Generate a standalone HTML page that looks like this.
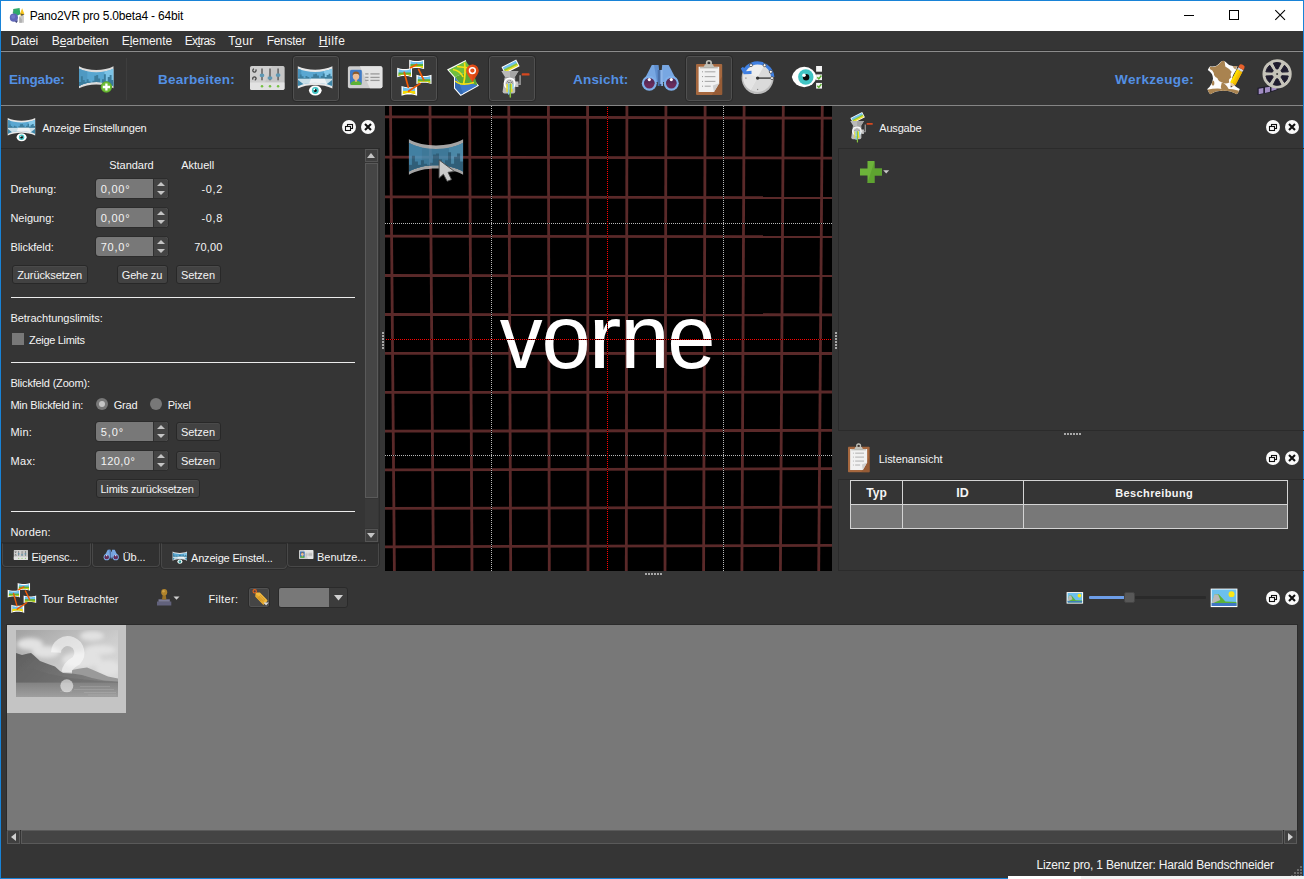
<!DOCTYPE html>
<html><head><meta charset="utf-8"><title>Pano2VR pro 5.0beta4 - 64bit</title>
<style>
html,body{margin:0;padding:0;background:#353535;}
body{width:1304px;height:879px;overflow:hidden;background:#353535;font-family:"Liberation Sans",sans-serif;position:relative;}
div,span,svg{box-sizing:border-box;}
svg{position:absolute;overflow:visible;}
.btn{position:absolute;background:#424242;border:1px solid #282828;border-radius:3px;box-shadow:inset 0 1px 0 #4a4a4a;}
.spin{position:absolute;background:#787878;border-radius:3px;overflow:hidden;box-shadow:0 0 0 1px rgba(30,30,30,.35);}
.spin i{position:absolute;right:0;top:0;bottom:0;width:14px;background:#444444;border-left:1px solid #303030;}
.spin i:before{content:"";position:absolute;left:2.5px;top:3px;border:4px solid transparent;border-top:0;border-bottom:4px solid #c4c4c4;}
.spin i:after{content:"";position:absolute;left:2.5px;bottom:3px;border:4px solid transparent;border-bottom:0;border-top:4px solid #c4c4c4;}
.hr{position:absolute;height:1px;background:#ececec;}
.tbtn{position:absolute;width:48px;height:47px;border:1px solid #292929;border-radius:4px;background:#3a3a3a;box-shadow:inset 0 0 0 1px #505050;}
.circ{position:absolute;width:14px;height:14px;border-radius:50%;background:#fafafa;}
.frame{position:absolute;border:1px solid #2b2b2b;}
.tab{position:absolute;border:1px solid #484848;border-top:1px solid #2a2a2a;border-radius:0 0 4px 4px;background:#323232;box-shadow:0 0 0 1px #2c2c2c;}
</style></head>
<body>
<div style="position:absolute;left:0px;top:0px;width:1304px;height:879px;border:1px solid #1883d7;"></div>
<div style="position:absolute;left:1px;top:1px;width:1302px;height:30px;background:#ffffff;"></div>
<!--APPICON-->
<span style="position:absolute;left:29.66px;top:7.84px;font-size:12px;line-height:16px;font-weight:normal;color:#000;letter-spacing:-0.193px;white-space:pre;">Pano2VR pro 5.0beta4 - 64bit</span>
<svg style="left:1180px;top:5px" width="120" height="22" viewBox="0 0 120 22"><path d="M4 10.5h10" stroke="#000" stroke-width="1" fill="none"/><rect x="49.5" y="5.5" width="9" height="9" stroke="#000" stroke-width="1" fill="none"/><path d="M95.3 5.2l9.7 9.700M105 5.2l-9.700 9.700" stroke="#000" stroke-width="1.1" fill="none"/></svg>
<div style="position:absolute;left:1px;top:50px;width:1302px;height:1px;background:#2c2c2c;"></div>
<div style="position:absolute;left:1px;top:51px;width:1302px;height:1px;background:#8c8c8c;"></div>
<span style="position:absolute;left:10.86px;top:32.84px;font-size:12px;line-height:16px;font-weight:normal;color:#f4f4f4;letter-spacing:-0.189px;white-space:pre;">Datei</span>
<span style="position:absolute;left:51.86px;top:32.84px;font-size:12px;line-height:16px;font-weight:normal;color:#f4f4f4;letter-spacing:-0.143px;white-space:pre;">B<span style="text-decoration:underline;text-underline-offset:1px">e</span>arbeiten</span>
<span style="position:absolute;left:121.66px;top:32.84px;font-size:12px;line-height:16px;font-weight:normal;color:#f4f4f4;letter-spacing:-0.035px;white-space:pre;">E<span style="text-decoration:underline;text-underline-offset:1px">l</span>emente</span>
<span style="position:absolute;left:184.76px;top:32.84px;font-size:12px;line-height:16px;font-weight:normal;color:#f4f4f4;letter-spacing:-0.631px;white-space:pre;">Ex<span style="text-decoration:underline;text-underline-offset:1px">t</span>ras</span>
<span style="position:absolute;left:228.36px;top:32.84px;font-size:12px;line-height:16px;font-weight:normal;color:#f4f4f4;letter-spacing:0.539px;white-space:pre;">T<span style="text-decoration:underline;text-underline-offset:1px">o</span>ur</span>
<span style="position:absolute;left:266.66px;top:32.84px;font-size:12px;line-height:16px;font-weight:normal;color:#f4f4f4;letter-spacing:-0.271px;white-space:pre;">Fenster</span>
<span style="position:absolute;left:318.76px;top:32.84px;font-size:12px;line-height:16px;font-weight:normal;color:#f4f4f4;letter-spacing:0.536px;white-space:pre;"><span style="text-decoration:underline;text-underline-offset:1px">H</span>ilfe</span>
<div style="position:absolute;left:1px;top:105px;width:1302px;height:1px;background:#858585;"></div>
<span style="position:absolute;left:9.05px;top:70.92px;font-size:13.5px;line-height:18px;font-weight:bold;color:#5390e4;letter-spacing:-0.180px;white-space:pre;">Eingabe:</span>
<span style="position:absolute;left:158.06px;top:70.92px;font-size:13.5px;line-height:18px;font-weight:bold;color:#5390e4;letter-spacing:0.247px;white-space:pre;">Bearbeiten:</span>
<span style="position:absolute;left:573.05px;top:70.92px;font-size:13.5px;line-height:18px;font-weight:bold;color:#5390e4;letter-spacing:0.179px;white-space:pre;">Ansicht:</span>
<span style="position:absolute;left:1115.06px;top:70.92px;font-size:13.5px;line-height:18px;font-weight:bold;color:#5390e4;letter-spacing:0.358px;white-space:pre;">Werkzeuge:</span>
<div style="position:absolute;left:126px;top:58px;width:1px;height:42px;background:#3e3e3e;"></div>
<div class="tbtn" style="left:292px;top:55px"></div>
<div class="tbtn" style="left:390px;top:55px"></div>
<div class="tbtn" style="left:488px;top:55px"></div>
<div class="tbtn" style="left:685px;top:55px"></div>

<!--ICON_ANZEIGE-->
<span style="position:absolute;left:42.23px;top:121.19px;font-size:11px;line-height:14px;font-weight:normal;color:#f4f4f4;letter-spacing:-0.221px;white-space:pre;">Anzeige Einstellungen</span>
<div class="circ" style="left:342px;top:120px"></div><svg style="left:342px;top:120px" width="14" height="14" viewBox="0 0 14 14"><rect x="5.5" y="4.5" width="5" height="4" fill="none" stroke="#111" stroke-width="1.1"/><rect x="3.5" y="6.5" width="5" height="4" fill="#fafafa" stroke="#111" stroke-width="1.1"/></svg><div class="circ" style="left:361px;top:120px"></div><svg style="left:361px;top:120px" width="14" height="14" viewBox="0 0 14 14"><path d="M4 4l6 6M10 4l-6 6" stroke="#111" stroke-width="2.1" stroke-linecap="butt"/></svg>
<div style="position:absolute;left:1px;top:148px;width:379px;height:1px;background:#2a2a2a;"></div>
<div style="position:absolute;left:379px;top:149px;width:1px;height:394px;background:#2e2e2e;"></div>
<div style="position:absolute;left:1px;top:542px;width:379px;height:1px;background:#2a2a2a;"></div>
<div style="position:absolute;left:365px;top:149px;width:13px;height:13px;background:#3f3f3f;border:1px solid #555;"></div>
<svg style="left:367px;top:153px" width="8" height="5"><path d="M0 5L4 0L8 5z" fill="#c4c4c4"/></svg>
<div style="position:absolute;left:365px;top:163px;width:13px;height:335px;background:#454545;border:1px solid #5a5a5a;"></div>
<div style="position:absolute;left:365px;top:499px;width:13px;height:29px;background:#3a3a3a;"></div>
<div style="position:absolute;left:365px;top:529px;width:13px;height:13px;background:#3f3f3f;border:1px solid #555;"></div>
<svg style="left:367px;top:533px" width="8" height="5"><path d="M0 0L4 5L8 0z" fill="#c4c4c4"/></svg>
<span style="position:absolute;left:109.23px;top:158.19px;font-size:11px;line-height:14px;font-weight:normal;color:#f4f4f4;letter-spacing:-0.032px;white-space:pre;">Standard</span>
<span style="position:absolute;left:181.23px;top:158.19px;font-size:11px;line-height:14px;font-weight:normal;color:#f4f4f4;letter-spacing:-0.017px;white-space:pre;">Aktuell</span>
<span style="position:absolute;left:10.43px;top:182.19px;font-size:11px;line-height:14px;font-weight:normal;color:#f4f4f4;letter-spacing:0.095px;white-space:pre;">Drehung:</span>
<div class="spin" style="left:96px;top:179px;width:72px;height:19px"><i></i></div><span style="position:absolute;left:100.63px;top:182.19px;font-size:11px;line-height:14px;font-weight:normal;color:#f4f4f4;letter-spacing:0.804px;white-space:pre;">0,00°</span>
<span style="position:absolute;left:201.43px;top:182.19px;font-size:11px;line-height:14px;font-weight:normal;color:#f4f4f4;letter-spacing:0.687px;white-space:pre;">-0,2</span>
<span style="position:absolute;left:10.43px;top:211.19px;font-size:11px;line-height:14px;font-weight:normal;color:#f4f4f4;letter-spacing:-0.017px;white-space:pre;">Neigung:</span>
<div class="spin" style="left:96px;top:208px;width:72px;height:19px"><i></i></div><span style="position:absolute;left:100.63px;top:211.19px;font-size:11px;line-height:14px;font-weight:normal;color:#f4f4f4;letter-spacing:0.804px;white-space:pre;">0,00°</span>
<span style="position:absolute;left:201.43px;top:211.19px;font-size:11px;line-height:14px;font-weight:normal;color:#f4f4f4;letter-spacing:0.687px;white-space:pre;">-0,8</span>
<span style="position:absolute;left:10.43px;top:240.19px;font-size:11px;line-height:14px;font-weight:normal;color:#f4f4f4;letter-spacing:-0.067px;white-space:pre;">Blickfeld:</span>
<div class="spin" style="left:96px;top:237px;width:72px;height:19px"><i></i></div><span style="position:absolute;left:100.63px;top:240.19px;font-size:11px;line-height:14px;font-weight:normal;color:#f4f4f4;letter-spacing:0.804px;white-space:pre;">70,0°</span>
<span style="position:absolute;left:194.23px;top:240.19px;font-size:11px;line-height:14px;font-weight:normal;color:#f4f4f4;letter-spacing:0.175px;white-space:pre;">70,00</span>
<div class="btn" style="left:12px;top:265px;width:76px;height:19px"></div><span style="position:absolute;left:17.23px;top:268.19px;font-size:11px;line-height:14px;font-weight:normal;color:#f4f4f4;letter-spacing:-0.100px;white-space:pre;">Zurücksetzen</span>
<div class="btn" style="left:117px;top:265px;width:51px;height:19px"></div><span style="position:absolute;left:121.83px;top:268.19px;font-size:11px;line-height:14px;font-weight:normal;color:#f4f4f4;letter-spacing:-0.194px;white-space:pre;">Gehe zu</span>
<div class="btn" style="left:176px;top:265px;width:45px;height:19px"></div><span style="position:absolute;left:180.93px;top:268.19px;font-size:11px;line-height:14px;font-weight:normal;color:#f4f4f4;letter-spacing:-0.024px;white-space:pre;">Setzen</span>
<div class="hr" style="left:11px;top:297px;width:344px"></div>
<span style="position:absolute;left:10.43px;top:311.19px;font-size:11px;line-height:14px;font-weight:normal;color:#f4f4f4;letter-spacing:-0.028px;white-space:pre;">Betrachtungslimits:</span>
<div style="position:absolute;left:12px;top:333px;width:12px;height:12px;background:#787878;"></div>
<span style="position:absolute;left:29.03px;top:333.19px;font-size:11px;line-height:14px;font-weight:normal;color:#f4f4f4;letter-spacing:-0.306px;white-space:pre;">Zeige Limits</span>
<div class="hr" style="left:11px;top:362px;width:344px"></div>
<span style="position:absolute;left:10.43px;top:376.19px;font-size:11px;line-height:14px;font-weight:normal;color:#f4f4f4;letter-spacing:-0.181px;white-space:pre;">Blickfeld (Zoom):</span>
<span style="position:absolute;left:10.43px;top:398.19px;font-size:11px;line-height:14px;font-weight:normal;color:#f4f4f4;letter-spacing:-0.218px;white-space:pre;">Min Blickfeld in:</span>
<div style="position:absolute;left:96px;top:398px;width:12px;height:12px;background:#787878;border-radius:50%;"></div>
<div style="position:absolute;left:99px;top:401px;width:6px;height:6px;background:#c6c6c6;border-radius:50%;"></div>
<span style="position:absolute;left:113.73px;top:398.19px;font-size:11px;line-height:14px;font-weight:normal;color:#f4f4f4;letter-spacing:-0.180px;white-space:pre;">Grad</span>
<div style="position:absolute;left:150px;top:398px;width:12px;height:12px;background:#787878;border-radius:50%;"></div>
<span style="position:absolute;left:167.63px;top:398.19px;font-size:11px;line-height:14px;font-weight:normal;color:#f4f4f4;letter-spacing:-0.103px;white-space:pre;">Pixel</span>
<span style="position:absolute;left:10.43px;top:425.19px;font-size:11px;line-height:14px;font-weight:normal;color:#f4f4f4;letter-spacing:0.216px;white-space:pre;">Min:</span>
<div class="spin" style="left:96px;top:422px;width:72px;height:19px"><i></i></div><span style="position:absolute;left:100.63px;top:425.19px;font-size:11px;line-height:14px;font-weight:normal;color:#f4f4f4;letter-spacing:0.976px;white-space:pre;">5,0°</span>
<div class="btn" style="left:176px;top:422px;width:45px;height:19px"></div><span style="position:absolute;left:180.93px;top:425.19px;font-size:11px;line-height:14px;font-weight:normal;color:#f4f4f4;letter-spacing:-0.024px;white-space:pre;">Setzen</span>
<span style="position:absolute;left:10.43px;top:454.19px;font-size:11px;line-height:14px;font-weight:normal;color:#f4f4f4;letter-spacing:0.362px;white-space:pre;">Max:</span>
<div class="spin" style="left:96px;top:451px;width:72px;height:19px"><i></i></div><span style="position:absolute;left:100.63px;top:454.19px;font-size:11px;line-height:14px;font-weight:normal;color:#f4f4f4;letter-spacing:0.458px;white-space:pre;">120,0°</span>
<div class="btn" style="left:176px;top:451px;width:45px;height:19px"></div><span style="position:absolute;left:180.93px;top:454.19px;font-size:11px;line-height:14px;font-weight:normal;color:#f4f4f4;letter-spacing:-0.024px;white-space:pre;">Setzen</span>
<div class="btn" style="left:96px;top:479px;width:104px;height:19px"></div><span style="position:absolute;left:100.43px;top:482.19px;font-size:11px;line-height:14px;font-weight:normal;color:#f4f4f4;letter-spacing:-0.176px;white-space:pre;">Limits zurücksetzen</span>
<div class="hr" style="left:11px;top:511px;width:344px"></div>
<span style="position:absolute;left:10.43px;top:525.19px;font-size:11px;line-height:14px;font-weight:normal;color:#f4f4f4;letter-spacing:0.182px;white-space:pre;">Norden:</span>
<div class="tab" style="left:2px;top:543px;width:89px;height:24px;background:#313131"></div>
<span style="position:absolute;left:31.43px;top:550.19px;font-size:11px;line-height:14px;font-weight:normal;color:#f4f4f4;letter-spacing:-0.176px;white-space:pre;">Eigensc...</span>
<div class="tab" style="left:92px;top:543px;width:68px;height:24px;background:#313131"></div>
<span style="position:absolute;left:122.73px;top:550.19px;font-size:11px;line-height:14px;font-weight:normal;color:#f4f4f4;letter-spacing:-0.076px;white-space:pre;">Üb...</span>
<div class="tab" style="left:161px;top:543px;width:126px;height:26px;background:#363636"></div>
<span style="position:absolute;left:191.03px;top:551.19px;font-size:11px;line-height:14px;font-weight:normal;color:#f4f4f4;letter-spacing:-0.181px;white-space:pre;">Anzeige Einstel...</span>
<div class="tab" style="left:287px;top:543px;width:92px;height:24px;background:#313131"></div>
<span style="position:absolute;left:317.03px;top:550.19px;font-size:11px;line-height:14px;font-weight:normal;color:#f4f4f4;letter-spacing:-0.013px;white-space:pre;">Benutze...</span>
<!--TABICONS-->
<div style="position:absolute;left:385px;top:106px;width:447px;height:465px;background:#000;overflow:hidden"><svg style="left:0;top:0" width="447" height="465" viewBox="385 106 447 465"><g stroke="#5a2929" stroke-width="2.8" fill="none"><path d="M390.46 101L394.44 576"/><path d="M429.96 101L433.44 576"/><path d="M469.57 101L472.03 576"/><path d="M508.78 101L510.72 576"/><path d="M548.39 101L549.31 576"/><path d="M587.60 101L588.00 576"/><path d="M626.91 101L626.29 576"/><path d="M665.91 101L664.99 576"/><path d="M705.12 101L703.58 576"/><path d="M744.12 101L741.88 576"/><path d="M783.33 101L780.37 576"/><path d="M822.34 101L818.66 576"/><path d="M380 116.78L837 118.22"/><path d="M380 157.19L837 158.11"/><path d="M380 196.79L837 197.71"/><path d="M380 236.19L837 236.71"/><path d="M380 275.50L837 275.70"/><path d="M380 314.50L837 314.80"/><path d="M380 353.40L837 353.50"/><path d="M380 392.40L837 392.00"/><path d="M380 431.21L837 430.39"/><path d="M380 469.91L837 468.69"/><path d="M380 508.41L837 507.09"/><path d="M380 546.82L837 545.28"/></g><text transform="translate(499.82 368.3) scale(0.9526 1)" font-family="Liberation Sans" font-size="90" fill="#fff">v</text><text transform="translate(541.46 368.3) scale(0.9836 1)" font-family="Liberation Sans" font-size="90" fill="#fff">o</text><text transform="translate(588.16 368.3) scale(1.1067 1)" font-family="Liberation Sans" font-size="90" fill="#fff">r</text><text transform="translate(620.17 368.3) scale(0.9870 1)" font-family="Liberation Sans" font-size="90" fill="#fff">n</text><text transform="translate(667.34 368.3) scale(0.9645 1)" font-family="Liberation Sans" font-size="90" fill="#fff">e</text><g stroke="#000" stroke-width="1" fill="none" shape-rendering="crispEdges"><path d="M491.5 106V571"/><path d="M723.5 106V571"/><path d="M385 223.5H832"/><path d="M385 455.5H832"/><path d="M607.5 106V571"/><path d="M385 339.5H832"/></g><g stroke="#b8b8b8" stroke-width="1" stroke-dasharray="1 1" fill="none" shape-rendering="crispEdges"><path d="M491.5 106V571"/><path d="M723.5 106V571"/><path d="M385 223.5H832"/><path d="M385 455.5H832"/></g><g stroke="#ff0000" stroke-width="1" stroke-dasharray="1 1" fill="none" shape-rendering="crispEdges"><path d="M607.5 107V571"/><path d="M386 339.5H832"/></g><g transform="translate(408.9 139.3)" opacity="0.84"><g opacity="1"><path d="M0 0.00C14.63 8.24 39.57 8.24 54.20 0.00L54.20 35.50C39.57 27.26 14.63 27.26 0 35.50Z" fill="#c4c4c4"/><clipPath id="pcv"><path d="M0 3.40C14.63 11.64 39.57 11.64 54.20 3.40L54.20 32.10C39.57 23.86 14.63 23.86 0 32.10Z"/></clipPath><g clip-path="url(#pcv)"><rect x="0" y="0" width="54.2" height="35.5" fill="#4a90b6"/><rect x="40.11" y="0" width="14.09" height="35.5" fill="#5aa2c8"/><rect x="0" y="0" width="13.01" height="35.5" fill="#4f99c2"/><path d="M0.00 33.73L0.00 25.65L3.01 25.65L3.01 16.42L6.02 16.42L6.02 22.19L9.03 22.19L9.03 27.96L12.04 27.96L12.04 21.03L15.06 21.03L15.06 24.49L18.07 24.49L18.07 30.26L21.08 30.26L21.08 23.34L24.09 23.34L24.09 15.26L27.10 15.26L27.10 14.11L30.11 14.11L30.11 19.88L33.12 19.88L33.12 26.80L36.13 26.80L36.13 21.03L39.14 21.03L39.14 12.96L42.16 12.96L42.16 24.49L45.17 24.49L45.17 17.57L48.18 17.57L48.18 14.11L51.19 14.11L51.19 22.19L54.20 22.19L54.20 33.73Z" fill="#3a7190"/><rect x="0" y="25.56" width="54.2" height="10.65" fill="#3a7190"/></g></g></g><path d="M439.2 160L439 178.2L443.4 174.2L447.2 181.3L451.5 179.6L448 172.3L454.4 171.4Z" fill="#cbcbcb" stroke="#4a4a4a" stroke-width="0.9" stroke-linejoin="round"/></svg></div>
<!--ICON_AUSGABE-->
<span style="position:absolute;left:879.23px;top:121.19px;font-size:11px;line-height:14px;font-weight:normal;color:#f4f4f4;letter-spacing:-0.168px;white-space:pre;">Ausgabe</span>
<div class="circ" style="left:1266px;top:120px"></div><svg style="left:1266px;top:120px" width="14" height="14" viewBox="0 0 14 14"><rect x="5.5" y="4.5" width="5" height="4" fill="none" stroke="#111" stroke-width="1.1"/><rect x="3.5" y="6.5" width="5" height="4" fill="#fafafa" stroke="#111" stroke-width="1.1"/></svg><div class="circ" style="left:1285px;top:120px"></div><svg style="left:1285px;top:120px" width="14" height="14" viewBox="0 0 14 14"><path d="M4 4l6 6M10 4l-6 6" stroke="#111" stroke-width="2.1" stroke-linecap="butt"/></svg>
<div class="frame" style="left:838px;top:148px;width:466px;height:283px;border-right:0"></div>
<svg style="left:860px;top:161px" width="30" height="22" viewBox="0 0 30 22"><path d="M7.5 0h7v7.5h7.5v7h-7.5v7.5h-7v-7.5h-7.5v-7h7.5z" fill="#6db33a"/><path d="M14.5 0v7.5h7.5v7h-7.5v7.5h-7z" fill="#5a9d2e" opacity=".75"/><path d="M23.2 9.2h6l-3 3.2z" fill="#c8c8c8"/></svg>
<!--ICON_LISTE-->
<span style="position:absolute;left:878.63px;top:452.19px;font-size:11px;line-height:14px;font-weight:normal;color:#f4f4f4;letter-spacing:-0.024px;white-space:pre;">Listenansicht</span>
<div class="circ" style="left:1266px;top:451px"></div><svg style="left:1266px;top:451px" width="14" height="14" viewBox="0 0 14 14"><rect x="5.5" y="4.5" width="5" height="4" fill="none" stroke="#111" stroke-width="1.1"/><rect x="3.5" y="6.5" width="5" height="4" fill="#fafafa" stroke="#111" stroke-width="1.1"/></svg><div class="circ" style="left:1285px;top:451px"></div><svg style="left:1285px;top:451px" width="14" height="14" viewBox="0 0 14 14"><path d="M4 4l6 6M10 4l-6 6" stroke="#111" stroke-width="2.1" stroke-linecap="butt"/></svg>
<div class="frame" style="left:838px;top:479px;width:466px;height:92px;border-right:0"></div>
<div style="position:absolute;left:850px;top:480px;width:438px;height:49px;border:1px solid #d4d4d4;"></div>
<div style="position:absolute;left:851px;top:505px;width:436px;height:23px;background:#787878;"></div>
<div style="position:absolute;left:851px;top:504px;width:436px;height:1px;background:#d4d4d4;"></div>
<div style="position:absolute;left:902px;top:481px;width:1px;height:47px;background:#d4d4d4;"></div>
<div style="position:absolute;left:1023px;top:481px;width:1px;height:47px;background:#d4d4d4;"></div>
<span style="position:absolute;left:866.27px;top:485.14px;font-size:12px;line-height:16px;font-weight:bold;color:#f4f4f4;letter-spacing:0.000px;white-space:pre;">Typ</span>
<span style="position:absolute;left:956.35px;top:484.97px;font-size:12.5px;line-height:16px;font-weight:bold;color:#f4f4f4;letter-spacing:0.000px;white-space:pre;">ID</span>
<span style="position:absolute;left:1115.29px;top:485.69px;font-size:11px;line-height:14px;font-weight:bold;color:#f4f4f4;letter-spacing:0.370px;white-space:pre;">Beschreibung</span>
<div style="position:absolute;left:645px;top:573px;width:2px;height:2px;background:#a8a8a8;"></div><div style="position:absolute;left:648px;top:573px;width:2px;height:2px;background:#a8a8a8;"></div><div style="position:absolute;left:651px;top:573px;width:2px;height:2px;background:#a8a8a8;"></div><div style="position:absolute;left:654px;top:573px;width:2px;height:2px;background:#a8a8a8;"></div><div style="position:absolute;left:657px;top:573px;width:2px;height:2px;background:#a8a8a8;"></div><div style="position:absolute;left:660px;top:573px;width:2px;height:2px;background:#a8a8a8;"></div>
<div style="position:absolute;left:1064px;top:433px;width:2px;height:2px;background:#a8a8a8;"></div><div style="position:absolute;left:1067px;top:433px;width:2px;height:2px;background:#a8a8a8;"></div><div style="position:absolute;left:1070px;top:433px;width:2px;height:2px;background:#a8a8a8;"></div><div style="position:absolute;left:1073px;top:433px;width:2px;height:2px;background:#a8a8a8;"></div><div style="position:absolute;left:1076px;top:433px;width:2px;height:2px;background:#a8a8a8;"></div><div style="position:absolute;left:1079px;top:433px;width:2px;height:2px;background:#a8a8a8;"></div>
<div style="position:absolute;left:382px;top:332px;width:2px;height:2px;background:#a8a8a8;"></div><div style="position:absolute;left:382px;top:335px;width:2px;height:2px;background:#a8a8a8;"></div><div style="position:absolute;left:382px;top:338px;width:2px;height:2px;background:#a8a8a8;"></div><div style="position:absolute;left:382px;top:341px;width:2px;height:2px;background:#a8a8a8;"></div><div style="position:absolute;left:382px;top:344px;width:2px;height:2px;background:#a8a8a8;"></div><div style="position:absolute;left:382px;top:347px;width:2px;height:2px;background:#a8a8a8;"></div>
<div style="position:absolute;left:835px;top:332px;width:2px;height:2px;background:#a8a8a8;"></div><div style="position:absolute;left:835px;top:335px;width:2px;height:2px;background:#a8a8a8;"></div><div style="position:absolute;left:835px;top:338px;width:2px;height:2px;background:#a8a8a8;"></div><div style="position:absolute;left:835px;top:341px;width:2px;height:2px;background:#a8a8a8;"></div><div style="position:absolute;left:835px;top:344px;width:2px;height:2px;background:#a8a8a8;"></div><div style="position:absolute;left:835px;top:347px;width:2px;height:2px;background:#a8a8a8;"></div>
<!--ICON_TOUR-->
<span style="position:absolute;left:42.03px;top:592.19px;font-size:11px;line-height:14px;font-weight:normal;color:#f4f4f4;letter-spacing:0.088px;white-space:pre;">Tour Betrachter</span>
<!--ICON_STAMP-->
<span style="position:absolute;left:208.53px;top:592.19px;font-size:11px;line-height:14px;font-weight:normal;color:#f4f4f4;letter-spacing:0.322px;white-space:pre;">Filter:</span>
<div class="btn" style="left:248px;top:587px;width:22px;height:21px;background:#454545;border-color:#2b2b2b;box-shadow:inset 0 0 0 1px #525252"></div>
<!--ICON_TAG-->
<div style="position:absolute;left:278px;top:587px;width:70px;height:21px;background:#3c3c3c;border:1px solid #2a2a2a;border-radius:3px;overflow:hidden;"><div style="position:absolute;left:0px;top:0px;width:50px;height:19px;background:#787878;"></div></div>
<svg style="left:334px;top:595px" width="9" height="6"><path d="M0 0h9L4.5 5.5z" fill="#d0d0d0"/></svg>
<!--ICON_IMGS-->
<div style="position:absolute;left:1089px;top:596px;width:36px;height:3px;background:#6d9ee8;border-radius:1px;"></div>
<div style="position:absolute;left:1135px;top:596px;width:71px;height:3px;background:#2a2a2a;border-radius:1px;"></div>
<div style="position:absolute;left:1124px;top:592px;width:11px;height:11px;background:#585858;border:1px solid #444;border-radius:2px;"></div>
<div class="circ" style="left:1266px;top:591px"></div><svg style="left:1266px;top:591px" width="14" height="14" viewBox="0 0 14 14"><rect x="5.5" y="4.5" width="5" height="4" fill="none" stroke="#111" stroke-width="1.1"/><rect x="3.5" y="6.5" width="5" height="4" fill="#fafafa" stroke="#111" stroke-width="1.1"/></svg><div class="circ" style="left:1285px;top:591px"></div><svg style="left:1285px;top:591px" width="14" height="14" viewBox="0 0 14 14"><path d="M4 4l6 6M10 4l-6 6" stroke="#111" stroke-width="2.1" stroke-linecap="butt"/></svg>
<div style="position:absolute;left:7px;top:625px;width:1290px;height:205px;background:#787878;box-shadow:0 0 0 1px #2b2b2b;"></div>
<div style="position:absolute;left:7px;top:625px;width:119px;height:88px;background:#c4c4c4;"></div>
<svg style="left:16px;top:630px" width="102" height="67" viewBox="16 630 102 67"><defs><linearGradient id="tsky" x1="0" y1="0" x2="0.9" y2="1"><stop offset="0" stop-color="#a2a2a2"/><stop offset="0.55" stop-color="#cdcdcd"/><stop offset="1" stop-color="#dedede"/></linearGradient><linearGradient id="tsea" x1="0" y1="0" x2="0" y2="1"><stop offset="0" stop-color="#828282"/><stop offset="1" stop-color="#a0a0a0"/></linearGradient><linearGradient id="tmt" x1="0" y1="0" x2="1" y2="0.3"><stop offset="0" stop-color="#5f5f5f"/><stop offset="1" stop-color="#808080"/></linearGradient><filter id="tbl" x="-20%" y="-20%" width="140%" height="140%"><feGaussianBlur stdDeviation="2.2"/></filter><filter id="tb2"><feGaussianBlur stdDeviation="0.6"/></filter><clipPath id="tcl"><rect x="16" y="630" width="102" height="67"/></clipPath></defs><g clip-path="url(#tcl)"><rect x="16" y="630" width="102" height="67" fill="url(#tsky)"/><g filter="url(#tbl)" fill="#e2e2e2"><ellipse cx="30" cy="644" rx="13" ry="6"/><ellipse cx="46" cy="652" rx="14" ry="6"/><ellipse cx="92" cy="636" rx="12" ry="5"/><ellipse cx="100" cy="650" rx="16" ry="5"/><ellipse cx="82" cy="660" rx="20" ry="8"/><ellipse cx="108" cy="668" rx="12" ry="8"/></g><path d="M72 670L80 668.500L87 667.500L92 669.500L100 673L108 676.500L118 678.500V684H72z" fill="#9a9a9a" filter="url(#tb2)"/><path d="M16 653L22 655L28 653.500L31 653L34 655.500L40 661L48 664L55 666.500L60 671L63 673L72 673.500L82 675L92 678L104 680.500L118 681.500V684H16z" fill="url(#tmt)" filter="url(#tb2)"/><path d="M16 672L30 668L50 674L70 678L100 681L118 682V684H16z" fill="#666" opacity=".45" filter="url(#tb2)"/><rect x="16" y="682.600" width="102" height="15" fill="url(#tsea)"/><g fill="#c4c4c4" opacity=".3"><rect x="80" y="686" width="30" height="0.8"/><rect x="74" y="689" width="40" height="0.8"/><rect x="84" y="692" width="32" height="0.9"/><rect x="88" y="694.500" width="28" height="0.9"/><rect x="60" y="691" width="12" height="0.7"/></g><g opacity="0.55"><path d="M56 652.500A11.700 11.700 0 1 1 76.500 660.500Q67 666 66.700 672" fill="none" stroke="#fff" stroke-width="10"/><circle cx="66.800" cy="685.800" r="6.500" fill="#fff"/></g></g></svg>
<div style="position:absolute;left:21px;top:830px;width:1262px;height:14px;background:#444;border:1px solid #5a5a5a;"></div>
<div style="position:absolute;left:7px;top:830px;width:13px;height:14px;background:#404040;border:1px solid #5a5a5a;"></div>
<div style="position:absolute;left:1284px;top:830px;width:13px;height:14px;background:#404040;border:1px solid #5a5a5a;"></div>
<svg style="left:11px;top:833px" width="5" height="8"><path d="M5 0v8L0 4z" fill="#d0d0d0"/></svg>
<svg style="left:1288px;top:833px" width="5" height="8"><path d="M0 0v8L5 4z" fill="#d0d0d0"/></svg>
<span style="position:absolute;left:1036.46px;top:856.84px;font-size:12px;line-height:16px;font-weight:normal;color:#f4f4f4;letter-spacing:-0.184px;white-space:pre;">Lizenz pro, 1 Benutzer: Harald Bendschneider</span>
<div style="position:absolute;left:1300px;top:866px;width:2px;height:2px;background:#6a6a6a;"></div><div style="position:absolute;left:1297px;top:869px;width:2px;height:2px;background:#6a6a6a;"></div><div style="position:absolute;left:1300px;top:869px;width:2px;height:2px;background:#6a6a6a;"></div><div style="position:absolute;left:1294px;top:872px;width:2px;height:2px;background:#6a6a6a;"></div><div style="position:absolute;left:1297px;top:872px;width:2px;height:2px;background:#6a6a6a;"></div><div style="position:absolute;left:1300px;top:872px;width:2px;height:2px;background:#6a6a6a;"></div><div style="position:absolute;left:1291px;top:875px;width:2px;height:2px;background:#6a6a6a;"></div><div style="position:absolute;left:1294px;top:875px;width:2px;height:2px;background:#6a6a6a;"></div><div style="position:absolute;left:1297px;top:875px;width:2px;height:2px;background:#6a6a6a;"></div><div style="position:absolute;left:1300px;top:875px;width:2px;height:2px;background:#6a6a6a;"></div>
<div style="position:absolute;left:1008px;top:876px;width:296px;height:3px;background:#f2f2f2;"></div>
<div style="position:absolute;left:1008px;top:876px;width:73px;height:3px;background:#ffffff;"></div><svg style="left:0;top:0;pointer-events:none" width="1304" height="879" viewBox="0 0 1304 879"><g transform="translate(9.60 7.50) scale(1.0200)" ><path d="M3.500 1.500L9.800 0.500L10.500 6.500L5 9z" fill="#2faa6a"/><path d="M3.500 1.500L5 9L3.200 5z" fill="#1f8a55"/><path d="M12.300 0.800L14.500 6.500L10.800 8.300L10.300 6z" fill="#f7c51e"/><path d="M10.300 6l4.200 0.500L12 8.800z" fill="#3a3a3a" opacity=".75"/><path d="M9.500 8.800L14 7.500V15H9.500z" fill="#c9c9c9"/><path d="M9.500 8.800L12 11.500V15H9.500z" fill="#b0b0b0"/><circle cx="4.200" cy="10" r="4" fill="#5f66b8"/><circle cx="3.500" cy="9" r="2" fill="#7c83cf" opacity=".7"/><path d="M5 13.800L6.800 15.300L8.500 12.500z" fill="#444a80"/></g><g transform="translate(79.00 66.20) scale(1.0000)" ><g opacity="1"><path d="M0 0.00C9.32 5.10 25.18 5.10 34.50 0.00L34.50 22.00C25.18 16.90 9.32 16.90 0 22.00Z" fill="#dcdcdc"/><clipPath id="pc345220"><path d="M0 2.30C9.32 7.40 25.18 7.40 34.50 2.30L34.50 19.70C25.18 14.60 9.32 14.60 0 19.70Z"/></clipPath><g clip-path="url(#pc345220)"><rect x="0" y="0" width="34.5" height="22" fill="#58a6d0"/><rect x="25.53" y="0" width="8.97" height="22" fill="#7cc3e6"/><rect x="0" y="0" width="8.28" height="22" fill="#4f99c2"/><path d="M0.00 20.90L0.00 15.89L1.92 15.89L1.92 10.17L3.83 10.17L3.83 13.75L5.75 13.75L5.75 17.32L7.67 17.32L7.67 13.03L9.58 13.03L9.58 15.18L11.50 15.18L11.50 18.75L13.42 18.75L13.42 14.46L15.33 14.46L15.33 9.46L17.25 9.46L17.25 8.74L19.17 8.74L19.17 12.32L21.08 12.32L21.08 16.61L23.00 16.61L23.00 13.03L24.92 13.03L24.92 8.03L26.83 8.03L26.83 15.18L28.75 15.18L28.75 10.89L30.67 10.89L30.67 8.74L32.58 8.74L32.58 13.75L34.50 13.75L34.50 20.90Z" fill="#3b7c9c"/><rect x="0" y="15.84" width="34.5" height="6.60" fill="#3b7c9c"/></g></g></g><g transform="translate(106.40 87.00) scale(1.0000)" ><circle r="5.7" fill="#5aa52a"/><circle r="4.9" fill="#6fbe37"/><path d="M-3.6 0H3.6M0 -3.6V3.6" stroke="#fff" stroke-width="2.3"/></g><g transform="translate(250.00 66.00) scale(1.0000)" ><rect x="0" y="0" width="34.5" height="24" rx="1.8" fill="#cfcfcf"/><path d="M22 0h10.7a1.8 1.8 0 0 1 1.8 1.8V16.5H15z" fill="#bdbdbd" opacity=".55"/><path d="M0 16.5h34.5v5.7a1.8 1.8 0 0 1 -1.8 1.8h-30.9a1.8 1.8 0 0 1 -1.8 -1.8z" fill="#e2e2e2"/><circle cx="4.4" cy="4.5" r="1.6" fill="none" stroke="#4a4a4a" stroke-width="1.3" stroke-dasharray="7.5 2.6" transform="rotate(-40 4.4 4.5)"/><circle cx="4.4" cy="12.5" r="1.6" fill="none" stroke="#4a4a4a" stroke-width="1.3" stroke-dasharray="7.5 2.6" transform="rotate(140 4.4 12.5)"/><rect x="11.2" y="2.5" width="1.6" height="11.8" fill="#666"/><rect x="9.8" y="7.700000000000001" width="4.4" height="3.2" rx="1.2" fill="#5d98b4"/><circle cx="12" cy="20.2" r="1.25" fill="#76c043"/><rect x="19.2" y="2.5" width="1.6" height="11.8" fill="#666"/><rect x="17.8" y="10.4" width="4.4" height="3.2" rx="1.2" fill="#5d98b4"/><circle cx="20" cy="20.2" r="1.25" fill="#76c043"/><rect x="27.3" y="2.5" width="1.6" height="11.8" fill="#666"/><rect x="25.900000000000002" y="7.6" width="4.4" height="3.2" rx="1.2" fill="#5d98b4"/><circle cx="28.1" cy="20.2" r="1.25" fill="#76c043"/></g><g transform="translate(297.80 66.30) scale(1.0000)" ><path d="M0 0.00C9.34 4.61 25.26 4.61 34.60 0.00L34.60 22.10C25.26 17.49 9.34 17.49 0 22.10Z" fill="#e8e8e8"/><clipPath id="pe1"><path d="M0 2.30C9.34 6.91 25.26 6.91 34.60 2.30L34.60 19.80C25.26 15.19 9.34 15.19 0 19.80Z"/></clipPath><g clip-path="url(#pe1)"><rect width="34.6" height="22.1" fill="#5aa7d1"/><rect x="26.30" width="8.30" height="22.1" fill="#86c9ea"/><rect width="3.46" height="22.1" fill="#4a93bb"/><path d="M0.00 13.50L0.00 11.05L1.92 11.05L1.92 8.25L3.84 8.25L3.84 10.00L5.77 10.00L5.77 11.75L7.69 11.75L7.69 9.65L9.61 9.65L9.61 10.70L11.53 10.70L11.53 12.45L13.46 12.45L13.46 10.35L15.38 10.35L15.38 7.90L17.30 7.90L17.30 7.55L19.22 7.55L19.22 9.30L21.14 9.30L21.14 11.40L23.07 11.40L23.07 9.65L24.99 9.65L24.99 7.20L26.91 7.20L26.91 10.70L28.83 10.70L28.83 8.60L30.76 8.60L30.76 7.55L32.68 7.55L32.68 10.00L34.60 10.00L34.60 13.50Z" fill="#3c7d9d"/><rect y="12.4" width="34.6" height="10" fill="#c9dfe8"/><path d="M13.15 12.4h13.84l4 9.7h-21.45z" fill="#eef2f4"/><path d="M0 13.5L5.5 17.8L0 22.1z" fill="#3f86a8"/><path d="M34.6 13.5L29.1 17.8L34.6 22.1z" fill="#3f86a8"/></g><g transform="translate(17.50 24.20) scale(1.0000)" ><path d="M-6.5 0A6.72 6.72 0 0 1 6.5 0A6.72 6.72 0 0 1 -6.5 0Z" fill="#fff"/><circle r="3.40" fill="#41c3c4"/><circle r="1.50" fill="#111"/><circle cx="-1.00" cy="-1.10" r="0.85" fill="#fff"/></g></g><g transform="translate(347.90 66.30) scale(1.0000)" ><rect width="34.5" height="22" rx="1.8" fill="#cdcdcd"/><path d="M12 0h20.7a1.8 1.8 0 0 1 1.8 1.8v18.4a1.8 1.8 0 0 1 -1.8 1.8H22z" fill="#e3e3e3"/><clipPath id="idp"><rect x="2.1" y="3.3" width="11.9" height="15.5" rx="2"/></clipPath><g clip-path="url(#idp)"><rect x="2.1" y="3.3" width="11.9" height="15.5" fill="#3f7bc6"/><ellipse cx="8.1" cy="19.5" rx="6.2" ry="5" fill="#5cb234"/><rect x="7" y="12.5" width="2.2" height="3" fill="#e2ad84"/><ellipse cx="8.1" cy="10" rx="3.2" ry="3.8" fill="#ecbd95"/><path d="M4.6 9.4Q4.4 5.2 8.1 5.2Q11.8 5.2 11.6 9.4Q10.5 7.2 8.1 7.6Q5.6 7.2 4.6 9.4z" fill="#8a5a2c"/></g><rect x="17.3" y="6.949999999999999" width="3.3" height="1.3" fill="#9a9a9a"/><rect x="22.5" y="6.949999999999999" width="9.2" height="1.3" fill="#9a9a9a"/><rect x="17.3" y="10.45" width="3.3" height="1.3" fill="#9a9a9a"/><rect x="22.5" y="10.45" width="9.2" height="1.3" fill="#9a9a9a"/><rect x="17.3" y="13.45" width="3.3" height="1.3" fill="#9a9a9a"/><rect x="22.5" y="13.45" width="9.2" height="1.3" fill="#9a9a9a"/></g><g transform="translate(397.20 59.80) scale(1.0000)" ><g transform="translate(12.00 0.00) scale(1.0000)" ><path d="M0 0.00C4.02 1.62 10.88 1.62 14.90 0.00L14.90 9.30C10.88 7.68 4.02 7.68 0 9.30Z" fill="#fff"/><g transform="translate(1 0)"><clipPath id="mp46"><path d="M0 1.10C3.48 2.72 9.42 2.72 12.90 1.10L12.90 8.20C9.42 6.58 3.48 6.58 0 8.20Z"/></clipPath><g clip-path="url(#mp46)"><rect width="12.9" height="9.3" fill="#6dc0ee"/><rect y="4.28" width="12.9" height="9.3" fill="#5fb233"/><rect y="6.32" width="12.9" height="9.3" fill="#f5d905"/></g></g></g><g transform="translate(0.00 8.00) scale(1.0000)" ><path d="M0 0.00C4.00 1.64 10.80 1.64 14.80 0.00L14.80 9.40C10.80 7.76 4.00 7.76 0 9.40Z" fill="#fff"/><g transform="translate(1 0)"><clipPath id="mp50"><path d="M0 1.10C3.46 2.74 9.34 2.74 12.80 1.10L12.80 8.30C9.34 6.66 3.46 6.66 0 8.30Z"/></clipPath><g clip-path="url(#mp50)"><rect width="12.8" height="9.4" fill="#6dc0ee"/><rect y="4.70" width="12.8" height="9.4" fill="#5fb233"/><rect y="6.77" width="12.8" height="9.4" fill="#f5d905"/></g></g></g><g transform="translate(19.20 15.00) scale(1.0000)" ><path d="M0 0.00C4.08 1.60 11.02 1.60 15.10 0.00L15.10 9.20C11.02 7.60 4.08 7.60 0 9.20Z" fill="#fff"/><g transform="translate(1 0)"><clipPath id="mp48"><path d="M0 1.10C3.54 2.70 9.56 2.70 13.10 1.10L13.10 8.10C9.56 6.50 3.54 6.50 0 8.10Z"/></clipPath><g clip-path="url(#mp48)"><rect width="13.1" height="9.2" fill="#6dc0ee"/><rect y="4.42" width="13.1" height="9.2" fill="#5fb233"/><rect y="6.44" width="13.1" height="9.2" fill="#f5d905"/></g></g></g><g transform="translate(4.30 26.20) scale(1.0000)" ><path d="M0 0.00C4.21 1.71 11.39 1.71 15.60 0.00L15.60 9.80C11.39 8.09 4.21 8.09 0 9.80Z" fill="#fff"/><g transform="translate(1 0)"><clipPath id="mp50"><path d="M0 1.10C3.67 2.81 9.93 2.81 13.60 1.10L13.60 8.70C9.93 6.99 3.67 6.99 0 8.70Z"/></clipPath><g clip-path="url(#mp50)"><rect width="13.6" height="9.8" fill="#6dc0ee"/><rect y="4.90" width="13.6" height="9.8" fill="#f5d905"/><rect y="7.06" width="13.6" height="9.8" fill="#f5d905"/></g></g></g><g stroke="#f05a05" stroke-width="1.7" stroke-linecap="round"><path d="M19.5 4.7L13.3 8"/><path d="M21.4 9.5L26.5 20.1"/><path d="M7 12.5L11.1 27.5"/><path d="M22.8 23.8L11.4 31.5"/></g></g><g transform="translate(447.00 60.00) scale(1.0000)" ><path d="M18.8 0L0 9.6L7 17.4V28.4L13.6 36.1L32 25.8L22 14z" fill="#fff"/><path d="M18.6 1.3L1.7 9.9L8 16.9L25.5 9.5z" fill="#6fbf3f"/><path d="M8 16.9L25.5 9.5L30.3 25.3L14 25z" fill="#5aa836"/><path d="M8 16.9V26L14 34.6L30.6 25.4L22 22.5L14 25z" fill="#3f7ac8"/><path d="M8 19V28L13.8 34.6L16 33.4L13 25z" fill="#346bb5"/><g fill="none" stroke="#f8e112" stroke-width="1.7"><path d="M17.5 2.5Q19 14 16.5 24"/><path d="M6 9.5Q13 10.5 16 17"/><path d="M8.3 21Q14 26.5 27 22.5"/><path d="M10 6.5L22 8"/></g><path d="M25.4 4.4a6.2 6.2 0 0 1 6.2 6.2c0 4-4.2 7.5-6.2 11.7c-2-4.2-6.2-7.7-6.2-11.700a6.2 6.2 0 0 1 6.2-6.2z" fill="#e9511b"/><path d="M25.4 4.4a6.2 6.2 0 0 1 6.2 6.2c0 4-4.2 7.5-6.2 11.700z" fill="#d4430f" opacity=".6"/><circle cx="25.4" cy="10.6" r="2.9" fill="none" stroke="#fff" stroke-width="1.5"/><circle cx="25.4" cy="10.6" r="1.5" fill="#e9511b"/></g><g transform="translate(501.00 59.00) scale(1.0000)" ><g transform="translate(0.5 8) rotate(-27)"><rect width="16.5" height="7.6" fill="#fff"/><rect x="1" y="1" width="14.5" height="2.8" fill="#72c2ee"/><rect x="1" y="3.3" width="14.5" height="2.3" fill="#8cc83c"/><rect x="1" y="5" width="14.5" height="1.6" fill="#f1e12a"/></g><path d="M0.3 12h17.2l-4 6.4h-9.2z" fill="#b9b9b9"/><path d="M9 12h8.500l-4 6.4H9z" fill="#a5a5a5"/><path d="M3.6 18.400h10.600v14.200a2 2 0 0 1 -2 2h-8.600a2 2 0 0 1 -2 -2z" fill="#bcbcbc"/><rect x="14.2" y="22.500" width="3.2" height="5.500" fill="#c6c6c6"/><path d="M16.800 25.300h2.300V16.300" fill="none" stroke="#9c9c9c" stroke-width="1.5"/><rect x="20.700" y="14.300" width="7.800" height="2.300" rx=".6" fill="#d6481f"/><circle cx="8.700" cy="24.600" r="5.300" fill="#d9d9d9" stroke="#fff" stroke-width="1.4"/><g fill="#555"><circle cx="6.4" cy="22.300" r=".55"/><circle cx="8" cy="21.800" r=".55"/><circle cx="9.600" cy="21.800" r=".55"/><circle cx="11.100" cy="22.300" r=".55"/><circle cx="5.800" cy="24" r=".55"/><circle cx="7.300" cy="23.600" r=".55"/><circle cx="8.800" cy="23.500" r=".55"/><circle cx="10.300" cy="23.600" r=".55"/><circle cx="11.700" cy="24" r=".55"/></g><g stroke-width="1.5" stroke-linecap="round"><path d="M6.100 25.500V32.500" stroke="#e9dd2a"/><path d="M7.700 25V35" stroke="#7ec7ea"/><path d="M9.300 25V38" stroke="#86c440"/><path d="M10.800 25.500V32.500" stroke="#e9dd2a"/><path d="M12 25.500V29.500" stroke="#8fd0f0"/></g></g><g transform="translate(641.50 64.50) scale(1.0000)" ><path d="M10.300 0.500h6.500l1.700 17h-17z" fill="#78a7e2"/><path d="M20.700 0.500h6.500l8.800 17h-17z" fill="#78a7e2"/><path d="M12.500 0.500h4.300l1.700 17h-3z" fill="#5f8fcf"/><rect x="16.200" y="5.500" width="5.200" height="16" fill="#4a70a9"/><rect x="18.900" y="5.500" width="2.500" height="16" fill="#8db6ea"/><rect x="17.800" y="19.500" width="2" height="2" fill="#2c4a7a"/><circle cx="7.8" cy="18.700" r="7.500" fill="#7fb0ea"/><circle cx="7.8" cy="18.700" r="5.300" fill="#6a2c5a"/><path d="M2.5 18.700a5.300 5.300 0 0 1 10.600 0z" fill="#4d2a55" opacity=".6"/><circle cx="7.8" cy="15.100" r="1.600" fill="#fff"/><circle cx="29.8" cy="18.700" r="7.500" fill="#7fb0ea"/><circle cx="29.8" cy="18.700" r="5.300" fill="#6a2c5a"/><path d="M24.5 18.700a5.300 5.300 0 0 1 10.600 0z" fill="#4d2a55" opacity=".6"/><circle cx="29.8" cy="15.100" r="1.600" fill="#fff"/></g><g transform="translate(696.00 60.00) scale(1.0000)" ><rect x="0" y="4" width="26.200" height="31" rx="1" fill="#a6683f"/><path d="M16 35h10.200V16z" fill="#8a5230" opacity=".55"/><path d="M2.600 6.700h20.600v16.500L18 32.100H2.600z" fill="#f1f1f1"/><path d="M23.200 23.200L18 32.100l-1.200 -6.600z" fill="#cfcfcf"/><circle cx="12.900" cy="3" r="2.300" fill="none" stroke="#c2c2ba" stroke-width="1.600"/><path d="M7.300 7.700L9 4.300h7.800l1.700 3.400z" fill="#c2c2ba"/><rect x="4" y="7.300" width="17.800" height="1" fill="#a9a9a2"/><rect x="6" y="11.3" width="1" height="1" fill="#999"/><rect x="8.700" y="11.25" width="10.7" height="1.100" fill="#aaa"/><rect x="6" y="16.1" width="1" height="1" fill="#999"/><rect x="8.700" y="16.05" width="10.7" height="1.100" fill="#aaa"/><rect x="6" y="20.9" width="1" height="1" fill="#999"/><rect x="8.700" y="20.849999999999998" width="10.7" height="1.100" fill="#aaa"/><rect x="6" y="25.7" width="1" height="1" fill="#999"/><rect x="8.700" y="25.65" width="6" height="1.100" fill="#aaa"/></g><g transform="translate(740.00 61.00) scale(1.0000)" ><circle cx="17.6" cy="17.1" r="16" fill="#bdbdbd"/><circle cx="17.6" cy="16.3" r="14.600" fill="#dadada"/><path d="M17.6 16.3L25.1 3.1000000000000014A14.600 14.600 0 0 0 3.8000000000000007 11.600000000000001L10.600000000000001 29.1z" fill="#ededed"/><path d="M3.8000000000000007 11.600000000000001A14.600 14.600 0 0 0 10.600000000000001 29.1L17.6 16.3z" fill="#e4e4e4"/><path d="M32.76 16.04A15.200 15.200 0 0 0 4.44 9.50" fill="none" stroke="#3f7fe0" stroke-width="3.200"/><path d="M0.800 7.600L3 5.800L6.500 10.300L11.500 9.700V12.900L3.800 13.300z" fill="#3f7fe0"/><circle cx="11" cy="4.2" r="1.500" fill="#fff" stroke="#333" stroke-width=".7"/><circle cx="24.6" cy="4.2" r="1.500" fill="#fff" stroke="#333" stroke-width=".7"/><circle cx="30.8" cy="10.8" r="1.500" fill="#fff" stroke="#333" stroke-width=".7"/><circle cx="32" cy="17.1" r="1.500" fill="#fff" stroke="#333" stroke-width=".7"/><path d="M17.6 17.1H30.1" stroke="#444" stroke-width="1.500"/><circle cx="17.6" cy="17.1" r="1.700" fill="#333"/><rect x="17.0" y="27.900000000000002" width="1.200" height="1.200" fill="#888"/><rect x="5.300" y="16.5" width="1.200" height="1.200" fill="#888"/></g><g transform="translate(791.50 65.50) scale(1.0000)" ><path d="M0.300 11.500A12.700 12.700 0 0 1 25.200 11.500A12.700 12.700 0 0 1 0.300 11.500Z" fill="#fff"/><circle cx="14.300" cy="11.500" r="7.700" fill="#3fc4c4"/><circle cx="14.600" cy="11.800" r="3.200" fill="#0b0b0b"/><circle cx="12.500" cy="9.800" r="1.800" fill="#fff"/><rect x="24.600" y="0.5" width="5.900" height="5.700" fill="#f4f4f4"/><rect x="24.600" y="8.9" width="5.900" height="5.700" fill="#f4f4f4"/><path d="M25.800 11.8l1.500 1.600l2.600 -3.400" fill="none" stroke="#5cb030" stroke-width="1.400"/><rect x="24.600" y="17.4" width="5.900" height="5.700" fill="#f4f4f4"/><path d="M25.800 20.299999999999997l1.500 1.600l2.600 -3.400" fill="none" stroke="#5cb030" stroke-width="1.400"/></g><g transform="translate(1207.30 60.50) scale(1.0000)" ><path d="M15.8 0.3Q18 0.5 20.6 3.5Q23 6 30.1 5.5Q29.5 9 27 12.5Q24 17 25 21Q26.5 26 32.5 28.5Q31.5 31.5 29.7 33.7Q22 29.8 15.7 30.4Q9 30 2.9 33.7Q1 31.5 0 28.5Q5 24.5 5.7 18Q5.5 12.5 0.5 9.4Q1.5 7 2.9 5.8Q8 7 11.5 3.5Q13.5 0.5 15.8 0.3Z" fill="#fdfdfd"/><clipPath id="hidec"><path d="M15.8 0.3Q18 0.5 20.6 3.5Q23 6 30.1 5.5Q29.5 9 27 12.5Q24 17 25 21Q26.5 26 32.5 28.5Q31.5 31.5 29.7 33.7Q22 29.8 15.7 30.4Q9 30 2.9 33.7Q1 31.5 0 28.5Q5 24.5 5.7 18Q5.5 12.5 0.5 9.4Q1.5 7 2.9 5.8Q8 7 11.5 3.5Q13.5 0.5 15.8 0.3Z"/></clipPath><g clip-path="url(#hidec)" fill="#a98350"><path d="M2.5 6Q8 7.5 11.5 4L14.8 0L17.2 0L18 6Q22 8 24.5 11.5Q22.5 13.5 24 17Q20.5 18.5 22 22Q18 23.800 15 22Q11 21 10 17.5Q6.500 16 6.500 12.500Q5.500 9.500 2.500 8.500Z"/><path d="M14.400 22Q19 23 21.800 29.500Q18 30 14.500 30Q12.800 26 14.400 22Z"/><path d="M-1 29.500Q8 27.300 15.700 28.400Q24 27.800 33 30.500L30 35Q22 29.800 15.700 30.400Q9 30 2.900 35Z"/><ellipse cx="5.700" cy="22.600" rx="1.400" ry="2.600"/><path d="M25 5L31 4.500L28 9Q26 7.500 25 5z" opacity=".8"/></g><g transform="translate(23.500 27) rotate(-62)"><path d="M0 0L4.500 -2.900V2.900z" fill="#e8c79a"/><path d="M0 0L1.700 -1.100V1.100z" fill="#444"/><rect x="4.500" y="-2.900" width="14.500" height="5.800" fill="#f9c700"/><rect x="4.500" y="-2.900" width="14.500" height="2" fill="#ffe100"/><rect x="4.500" y="1.200" width="14.500" height="1.700" fill="#f0b400"/><rect x="19" y="-2.900" width="2.400" height="5.800" fill="#d9d9d9"/><path d="M21.400 -2.900h2a2.200 2.200 0 0 1 2.200 2.200v1.400a2.200 2.200 0 0 1 -2.200 2.200h-2z" fill="#e8602a"/></g></g><g transform="translate(1257.00 59.00) scale(1.0000)" ><path d="M0.500 28.700Q14 26 22 27.500L27.500 27.500Q22 31 12 33.500L0.500 36z" fill="#1f1c2e"/><path d="M1.700 29.700l4.600 -0.800v5.400l-4.600 1z" fill="#a18dc2"/><path d="M8 28.500l5 -0.700v5l-5 1.200z" fill="#a18dc2"/><path d="M14.500 27.700l5 -0.300v3l-5 1.700z" fill="#a18dc2"/><circle cx="20.1" cy="14.9" r="14.600" fill="#c5c3b9"/><path d="M20.88 9.96L23.91 4.15A11.4 11.4 0 0 0 16.29 4.15L19.32 9.96Z" fill="#1f1c2e" stroke="#1f1c2e" stroke-width="1" stroke-linejoin="round"/><path d="M16.21 11.75L12.70 6.23A11.4 11.4 0 0 0 8.89 12.82L15.43 13.11Z" fill="#1f1c2e" stroke="#1f1c2e" stroke-width="1" stroke-linejoin="round"/><path d="M15.43 16.69L8.89 16.98A11.4 11.4 0 0 0 12.70 23.57L16.21 18.05Z" fill="#1f1c2e" stroke="#1f1c2e" stroke-width="1" stroke-linejoin="round"/><path d="M19.32 19.84L16.29 25.65A11.4 11.4 0 0 0 23.91 25.65L20.88 19.84Z" fill="#1f1c2e" stroke="#1f1c2e" stroke-width="1" stroke-linejoin="round"/><path d="M23.99 18.05L27.50 23.57A11.4 11.4 0 0 0 31.31 16.98L24.77 16.69Z" fill="#1f1c2e" stroke="#1f1c2e" stroke-width="1" stroke-linejoin="round"/><path d="M24.77 13.11L31.31 12.82A11.4 11.4 0 0 0 27.50 6.23L23.99 11.75Z" fill="#1f1c2e" stroke="#1f1c2e" stroke-width="1" stroke-linejoin="round"/><circle cx="20.1" cy="14.9" r="1" fill="#3a3a3a"/></g><g transform="translate(7.70 118.00) scale(0.7948)" ><path d="M0 0.00C9.34 4.61 25.26 4.61 34.60 0.00L34.60 22.10C25.26 17.49 9.34 17.49 0 22.10Z" fill="#e8e8e8"/><clipPath id="pe2"><path d="M0 2.30C9.34 6.91 25.26 6.91 34.60 2.30L34.60 19.80C25.26 15.19 9.34 15.19 0 19.80Z"/></clipPath><g clip-path="url(#pe2)"><rect width="34.6" height="22.1" fill="#5aa7d1"/><rect x="26.30" width="8.30" height="22.1" fill="#86c9ea"/><rect width="3.46" height="22.1" fill="#4a93bb"/><path d="M0.00 13.50L0.00 11.05L1.92 11.05L1.92 8.25L3.84 8.25L3.84 10.00L5.77 10.00L5.77 11.75L7.69 11.75L7.69 9.65L9.61 9.65L9.61 10.70L11.53 10.70L11.53 12.45L13.46 12.45L13.46 10.35L15.38 10.35L15.38 7.90L17.30 7.90L17.30 7.55L19.22 7.55L19.22 9.30L21.14 9.30L21.14 11.40L23.07 11.40L23.07 9.65L24.99 9.65L24.99 7.20L26.91 7.20L26.91 10.70L28.83 10.70L28.83 8.60L30.76 8.60L30.76 7.55L32.68 7.55L32.68 10.00L34.60 10.00L34.60 13.50Z" fill="#3c7d9d"/><rect y="12.4" width="34.6" height="10" fill="#c9dfe8"/><path d="M13.15 12.4h13.84l4 9.7h-21.45z" fill="#eef2f4"/><path d="M0 13.5L5.5 17.8L0 22.1z" fill="#3f86a8"/><path d="M34.6 13.5L29.1 17.8L34.6 22.1z" fill="#3f86a8"/></g><g transform="translate(17.50 24.20) scale(1.0000)" ><path d="M-6.5 0A6.72 6.72 0 0 1 6.5 0A6.72 6.72 0 0 1 -6.5 0Z" fill="#fff"/><circle r="3.40" fill="#41c3c4"/><circle r="1.50" fill="#111"/><circle cx="-1.00" cy="-1.10" r="0.85" fill="#fff"/></g></g><g transform="translate(850.00 111.50) scale(0.8000)" ><g transform="translate(0.5 8) rotate(-27)"><rect width="16.5" height="7.6" fill="#fff"/><rect x="1" y="1" width="14.5" height="2.8" fill="#72c2ee"/><rect x="1" y="3.3" width="14.5" height="2.3" fill="#8cc83c"/><rect x="1" y="5" width="14.5" height="1.6" fill="#f1e12a"/></g><path d="M0.3 12h17.2l-4 6.4h-9.2z" fill="#b9b9b9"/><path d="M9 12h8.500l-4 6.4H9z" fill="#a5a5a5"/><path d="M3.6 18.400h10.600v14.200a2 2 0 0 1 -2 2h-8.600a2 2 0 0 1 -2 -2z" fill="#bcbcbc"/><rect x="14.2" y="22.500" width="3.2" height="5.500" fill="#c6c6c6"/><path d="M16.800 25.300h2.300V16.300" fill="none" stroke="#9c9c9c" stroke-width="1.5"/><rect x="20.700" y="14.300" width="7.800" height="2.300" rx=".6" fill="#d6481f"/><circle cx="8.700" cy="24.600" r="5.300" fill="#d9d9d9" stroke="#fff" stroke-width="1.4"/><g fill="#555"><circle cx="6.4" cy="22.300" r=".55"/><circle cx="8" cy="21.800" r=".55"/><circle cx="9.600" cy="21.800" r=".55"/><circle cx="11.100" cy="22.300" r=".55"/><circle cx="5.800" cy="24" r=".55"/><circle cx="7.300" cy="23.600" r=".55"/><circle cx="8.800" cy="23.500" r=".55"/><circle cx="10.300" cy="23.600" r=".55"/><circle cx="11.700" cy="24" r=".55"/></g><g stroke-width="1.5" stroke-linecap="round"><path d="M6.100 25.500V32.500" stroke="#e9dd2a"/><path d="M7.700 25V35" stroke="#7ec7ea"/><path d="M9.300 25V38" stroke="#86c440"/><path d="M10.800 25.500V32.500" stroke="#e9dd2a"/><path d="M12 25.500V29.500" stroke="#8fd0f0"/></g></g><g transform="translate(848.00 443.40) scale(0.8250)" ><rect x="0" y="4" width="26.200" height="31" rx="1" fill="#a6683f"/><path d="M16 35h10.200V16z" fill="#8a5230" opacity=".55"/><path d="M2.600 6.700h20.600v16.500L18 32.100H2.600z" fill="#f1f1f1"/><path d="M23.200 23.200L18 32.100l-1.200 -6.600z" fill="#cfcfcf"/><circle cx="12.900" cy="3" r="2.300" fill="none" stroke="#c2c2ba" stroke-width="1.600"/><path d="M7.300 7.700L9 4.300h7.800l1.700 3.400z" fill="#c2c2ba"/><rect x="4" y="7.300" width="17.800" height="1" fill="#a9a9a2"/><rect x="6" y="11.3" width="1" height="1" fill="#999"/><rect x="8.700" y="11.25" width="10.7" height="1.100" fill="#aaa"/><rect x="6" y="16.1" width="1" height="1" fill="#999"/><rect x="8.700" y="16.05" width="10.7" height="1.100" fill="#aaa"/><rect x="6" y="20.9" width="1" height="1" fill="#999"/><rect x="8.700" y="20.849999999999998" width="10.7" height="1.100" fill="#aaa"/><rect x="6" y="25.7" width="1" height="1" fill="#999"/><rect x="8.700" y="25.65" width="6" height="1.100" fill="#aaa"/></g><g transform="translate(7.70 583.00) scale(0.8300)" ><g transform="translate(12.00 0.00) scale(1.0000)" ><path d="M0 0.00C4.02 1.62 10.88 1.62 14.90 0.00L14.90 9.30C10.88 7.68 4.02 7.68 0 9.30Z" fill="#fff"/><g transform="translate(1 0)"><clipPath id="mq46"><path d="M0 1.10C3.48 2.72 9.42 2.72 12.90 1.10L12.90 8.20C9.42 6.58 3.48 6.58 0 8.20Z"/></clipPath><g clip-path="url(#mq46)"><rect width="12.9" height="9.3" fill="#6dc0ee"/><rect y="4.28" width="12.9" height="9.3" fill="#5fb233"/><rect y="6.32" width="12.9" height="9.3" fill="#f5d905"/></g></g></g><g transform="translate(0.00 8.00) scale(1.0000)" ><path d="M0 0.00C4.00 1.64 10.80 1.64 14.80 0.00L14.80 9.40C10.80 7.76 4.00 7.76 0 9.40Z" fill="#fff"/><g transform="translate(1 0)"><clipPath id="mq50"><path d="M0 1.10C3.46 2.74 9.34 2.74 12.80 1.10L12.80 8.30C9.34 6.66 3.46 6.66 0 8.30Z"/></clipPath><g clip-path="url(#mq50)"><rect width="12.8" height="9.4" fill="#6dc0ee"/><rect y="4.70" width="12.8" height="9.4" fill="#5fb233"/><rect y="6.77" width="12.8" height="9.4" fill="#f5d905"/></g></g></g><g transform="translate(19.20 15.00) scale(1.0000)" ><path d="M0 0.00C4.08 1.60 11.02 1.60 15.10 0.00L15.10 9.20C11.02 7.60 4.08 7.60 0 9.20Z" fill="#fff"/><g transform="translate(1 0)"><clipPath id="mq48"><path d="M0 1.10C3.54 2.70 9.56 2.70 13.10 1.10L13.10 8.10C9.56 6.50 3.54 6.50 0 8.10Z"/></clipPath><g clip-path="url(#mq48)"><rect width="13.1" height="9.2" fill="#6dc0ee"/><rect y="4.42" width="13.1" height="9.2" fill="#5fb233"/><rect y="6.44" width="13.1" height="9.2" fill="#f5d905"/></g></g></g><g transform="translate(4.30 26.20) scale(1.0000)" ><path d="M0 0.00C4.21 1.71 11.39 1.71 15.60 0.00L15.60 9.80C11.39 8.09 4.21 8.09 0 9.80Z" fill="#fff"/><g transform="translate(1 0)"><clipPath id="mq50"><path d="M0 1.10C3.67 2.81 9.93 2.81 13.60 1.10L13.60 8.70C9.93 6.99 3.67 6.99 0 8.70Z"/></clipPath><g clip-path="url(#mq50)"><rect width="13.6" height="9.8" fill="#6dc0ee"/><rect y="4.90" width="13.6" height="9.8" fill="#f5d905"/><rect y="7.06" width="13.6" height="9.8" fill="#f5d905"/></g></g></g><g stroke="#f05a05" stroke-width="1.7" stroke-linecap="round"><path d="M19.5 4.7L13.3 8"/><path d="M21.4 9.5L26.5 20.1"/><path d="M7 12.5L11.1 27.5"/><path d="M22.8 23.8L11.4 31.5"/></g></g><g transform="translate(13.80 550.00) scale(0.4116)" ><rect x="0" y="0" width="34.5" height="24" rx="1.8" fill="#cfcfcf"/><path d="M22 0h10.7a1.8 1.8 0 0 1 1.8 1.8V16.5H15z" fill="#bdbdbd" opacity=".55"/><path d="M0 16.5h34.5v5.7a1.8 1.8 0 0 1 -1.8 1.8h-30.9a1.8 1.8 0 0 1 -1.8 -1.8z" fill="#e2e2e2"/><circle cx="4.4" cy="4.5" r="1.6" fill="none" stroke="#4a4a4a" stroke-width="1.3" stroke-dasharray="7.5 2.6" transform="rotate(-40 4.4 4.5)"/><circle cx="4.4" cy="12.5" r="1.6" fill="none" stroke="#4a4a4a" stroke-width="1.3" stroke-dasharray="7.5 2.6" transform="rotate(140 4.4 12.5)"/><rect x="11.2" y="2.5" width="1.6" height="11.8" fill="#666"/><rect x="9.8" y="7.700000000000001" width="4.4" height="3.2" rx="1.2" fill="#5d98b4"/><circle cx="12" cy="20.2" r="1.25" fill="#76c043"/><rect x="19.2" y="2.5" width="1.6" height="11.8" fill="#666"/><rect x="17.8" y="10.4" width="4.4" height="3.2" rx="1.2" fill="#5d98b4"/><circle cx="20" cy="20.2" r="1.25" fill="#76c043"/><rect x="27.3" y="2.5" width="1.6" height="11.8" fill="#666"/><rect x="25.900000000000002" y="7.6" width="4.4" height="3.2" rx="1.2" fill="#5d98b4"/><circle cx="28.1" cy="20.2" r="1.25" fill="#76c043"/></g><g transform="translate(103.50 549.50) scale(0.4107)" ><path d="M10.300 0.500h6.500l1.700 17h-17z" fill="#78a7e2"/><path d="M20.700 0.500h6.500l8.800 17h-17z" fill="#78a7e2"/><path d="M12.500 0.500h4.300l1.700 17h-3z" fill="#5f8fcf"/><rect x="16.200" y="5.500" width="5.200" height="16" fill="#4a70a9"/><rect x="18.900" y="5.500" width="2.500" height="16" fill="#8db6ea"/><rect x="17.800" y="19.500" width="2" height="2" fill="#2c4a7a"/><circle cx="7.8" cy="18.700" r="7.500" fill="#7fb0ea"/><circle cx="7.8" cy="18.700" r="5.300" fill="#6a2c5a"/><path d="M2.5 18.700a5.300 5.300 0 0 1 10.600 0z" fill="#4d2a55" opacity=".6"/><circle cx="7.8" cy="15.100" r="1.600" fill="#fff"/><circle cx="29.8" cy="18.700" r="7.500" fill="#7fb0ea"/><circle cx="29.8" cy="18.700" r="5.300" fill="#6a2c5a"/><path d="M24.5 18.700a5.300 5.300 0 0 1 10.600 0z" fill="#4d2a55" opacity=".6"/><circle cx="29.8" cy="15.100" r="1.600" fill="#fff"/></g><g transform="translate(172.60 551.60) scale(0.4162)" ><path d="M0 0.00C9.34 4.61 25.26 4.61 34.60 0.00L34.60 22.10C25.26 17.49 9.34 17.49 0 22.10Z" fill="#e8e8e8"/><clipPath id="pe3"><path d="M0 2.30C9.34 6.91 25.26 6.91 34.60 2.30L34.60 19.80C25.26 15.19 9.34 15.19 0 19.80Z"/></clipPath><g clip-path="url(#pe3)"><rect width="34.6" height="22.1" fill="#5aa7d1"/><rect x="26.30" width="8.30" height="22.1" fill="#86c9ea"/><rect width="3.46" height="22.1" fill="#4a93bb"/><path d="M0.00 13.50L0.00 11.05L1.92 11.05L1.92 8.25L3.84 8.25L3.84 10.00L5.77 10.00L5.77 11.75L7.69 11.75L7.69 9.65L9.61 9.65L9.61 10.70L11.53 10.70L11.53 12.45L13.46 12.45L13.46 10.35L15.38 10.35L15.38 7.90L17.30 7.90L17.30 7.55L19.22 7.55L19.22 9.30L21.14 9.30L21.14 11.40L23.07 11.40L23.07 9.65L24.99 9.65L24.99 7.20L26.91 7.20L26.91 10.70L28.83 10.70L28.83 8.60L30.76 8.60L30.76 7.55L32.68 7.55L32.68 10.00L34.60 10.00L34.60 13.50Z" fill="#3c7d9d"/><rect y="12.4" width="34.6" height="10" fill="#c9dfe8"/><path d="M13.15 12.4h13.84l4 9.7h-21.45z" fill="#eef2f4"/><path d="M0 13.5L5.5 17.8L0 22.1z" fill="#3f86a8"/><path d="M34.6 13.5L29.1 17.8L34.6 22.1z" fill="#3f86a8"/></g><g transform="translate(17.50 24.20) scale(1.0000)" ><path d="M-6.5 0A6.72 6.72 0 0 1 6.5 0A6.72 6.72 0 0 1 -6.5 0Z" fill="#fff"/><circle r="3.40" fill="#41c3c4"/><circle r="1.50" fill="#111"/><circle cx="-1.00" cy="-1.10" r="0.85" fill="#fff"/></g></g><g transform="translate(299.00 550.00) scale(0.4145)" ><rect width="34.5" height="22" rx="1.8" fill="#cdcdcd"/><path d="M12 0h20.7a1.8 1.8 0 0 1 1.8 1.8v18.4a1.8 1.8 0 0 1 -1.8 1.8H22z" fill="#e3e3e3"/><clipPath id="idq"><rect x="2.1" y="3.3" width="11.9" height="15.5" rx="2"/></clipPath><g clip-path="url(#idq)"><rect x="2.1" y="3.3" width="11.9" height="15.5" fill="#3f7bc6"/><ellipse cx="8.1" cy="19.5" rx="6.2" ry="5" fill="#5cb234"/><rect x="7" y="12.5" width="2.2" height="3" fill="#e2ad84"/><ellipse cx="8.1" cy="10" rx="3.2" ry="3.8" fill="#ecbd95"/><path d="M4.6 9.4Q4.4 5.2 8.1 5.2Q11.8 5.2 11.6 9.4Q10.5 7.2 8.1 7.6Q5.6 7.2 4.6 9.4z" fill="#8a5a2c"/></g><rect x="17.3" y="6.949999999999999" width="3.3" height="1.3" fill="#9a9a9a"/><rect x="22.5" y="6.949999999999999" width="9.2" height="1.3" fill="#9a9a9a"/><rect x="17.3" y="10.45" width="3.3" height="1.3" fill="#9a9a9a"/><rect x="22.5" y="10.45" width="9.2" height="1.3" fill="#9a9a9a"/><rect x="17.3" y="13.45" width="3.3" height="1.3" fill="#9a9a9a"/><rect x="22.5" y="13.45" width="9.2" height="1.3" fill="#9a9a9a"/></g><g transform="translate(157.00 589.00) scale(1.0000)" ><rect x="0" y="12.500" width="14.300" height="4" fill="#62627c"/><rect x="1.500" y="10.300" width="11.300" height="2.400" fill="#7d7d98"/><path d="M5 10.500L5.800 5h2.800l0.800 5.500z" fill="#9a7226"/><ellipse cx="7.200" cy="3.200" rx="3" ry="3.200" fill="#b0842c"/><ellipse cx="6.500" cy="2.300" rx="1.200" ry="1.300" fill="#e0b050" opacity=".7"/></g><g transform="translate(255.6 592.4) rotate(46)"><path d="M0 0L3 -3.100H13.500a1 1 0 0 1 1 1V2.100a1 1 0 0 1 -1 1H3z" fill="#f1b93f"/><path d="M3 0.600H14.500V2.100a1 1 0 0 1 -1 1H3L1.500 1.600z" fill="#dc9f28" opacity=".7"/><g fill="#c98d22"><rect x="5" y="-1.600" width="7" height=".7"/><rect x="5" y="0" width="7" height=".7"/><rect x="5" y="1.500" width="5" height=".7"/></g></g><circle cx="254.700" cy="591.300" r="1.700" fill="none" stroke="#e5611b" stroke-width="1.100"/><path d="M263.400 602.600h5.400l-2.700 2.800z" fill="#d8d8d8"/><path d="M173.500 596.500h6l-3 3.300z" fill="#d0d0d0"/><g transform="translate(1066.60 592.10) scale(1.0000)" ><rect width="16.5" height="11.5" fill="#fff"/><clipPath id="im16"><rect x="1" y="1" width="14.5" height="9.5"/></clipPath><g clip-path="url(#im16)"><rect width="16.5" height="11.5" fill="#6cc0ee"/><circle cx="12.87" cy="3.45" r="1.84" fill="#fbe715"/><path d="M1 8.97L2.48 3.45L4.95 3.45L9.08 8.05L16.5 8.28V11.5H1z" fill="#5cb238"/><path d="M1 8.62L2.31 3.45L4.62 3.68L5.94 7.13L1 9.43z" fill="#b9b9b9"/><rect y="8.97" width="16.5" height="2.88" fill="#3f76c4"/></g></g><g transform="translate(1210.70 588.60) scale(1.0000)" ><rect width="26.7" height="18.5" fill="#fff"/><clipPath id="im26"><rect x="1" y="1" width="24.7" height="16.5"/></clipPath><g clip-path="url(#im26)"><rect width="26.7" height="18.5" fill="#6cc0ee"/><circle cx="20.83" cy="5.55" r="2.96" fill="#fbe715"/><path d="M1 14.43L4.00 5.55L8.01 5.55L14.69 12.95L26.7 13.32V18.5H1z" fill="#5cb238"/><path d="M1 13.88L3.74 5.55L7.48 5.92L9.61 11.47L1 15.17z" fill="#b9b9b9"/><rect y="14.43" width="26.7" height="4.62" fill="#3f76c4"/></g></g></svg>
</body></html>
